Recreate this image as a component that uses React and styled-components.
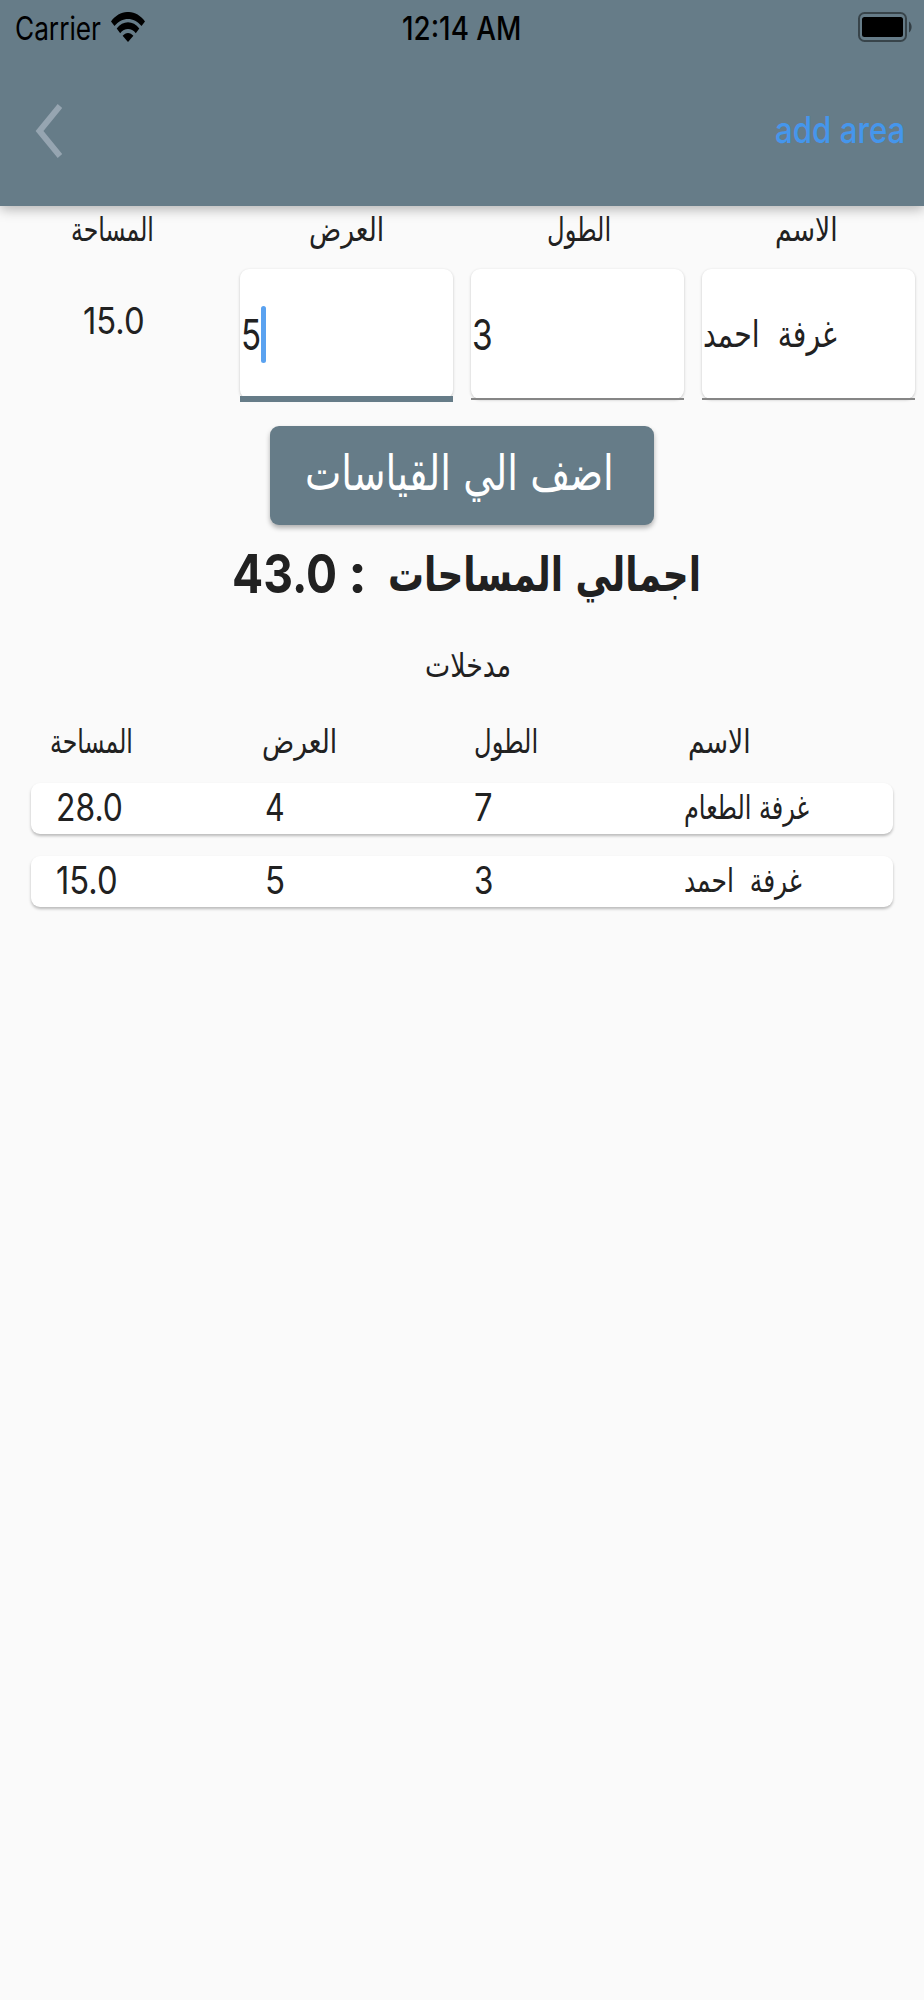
import { useLayoutEffect, useRef, useState } from "react";
import styled, { createGlobalStyle } from "styled-components";

const GlobalStyle = createGlobalStyle`
  * {
    box-sizing: border-box;
  }

  body {
    margin: 0;
    background: #fafafa;
    color: #212121;
    font-family: Inter, "DejaVu Sans", sans-serif;
  }
`;

const Screen = styled.div`
  width: 924px;
  min-height: 2000px;
  background: #fafafa;
`;

const Header = styled.header`
  position: relative;
  height: 206px;
  background: #667c88;
  box-shadow: 0 3px 12px rgba(0, 0, 0, 0.3);
`;

const StatusBar = styled.div`
  display: grid;
  grid-template-columns: 1fr 119px 1fr;
  align-items: center;
  height: 57px;
  padding: 0 12px 0 15px;
  color: #000;
`;

const Carrier = styled.div`
  display: flex;
  align-items: center;
  gap: 10px;
`;

const Time = styled.div`
  margin-left: -2px;
`;

const Battery = styled.svg`
  justify-self: end;
  margin-bottom: 3px;
`;

const Wifi = styled.svg`
  margin-bottom: 3px;
`;

const Toolbar = styled.div`
  display: flex;
  align-items: center;
  justify-content: space-between;
  height: 147px;
  padding: 0 19px 0 35px;
`;

const BackButton = styled.button`
  display: flex;
  padding: 0;
  border: none;
  background: none;
`;

const AddButton = styled.button`
  padding: 0 0 3px;
  border: none;
  background: none;
  color: #4596ec;
`;

const TextBox = styled.span`
  display: block;
  flex: none;
  width: ${({ $width }) => $width}px;
  height: ${({ $height }) => $height}px;
  line-height: ${({ $height }) => $height}px;
  font-size: ${({ $size }) => $size}px;
  font-weight: ${({ $weight }) => $weight};
  font-family: ${({ $arabic }) =>
    $arabic ? '"DejaVu Sans", sans-serif' : "Inter, sans-serif"};
  text-align: left;
  direction: ltr;
`;

const TextInner = styled.span`
  display: inline-block;
  white-space: pre;
  transform-origin: left center;
`;

const FormLabels = styled.div`
  display: grid;
  grid-template-columns: 225px 243px 222px 1fr;
  justify-items: center;
  align-items: center;
  height: 46px;
  padding-right: 2px;
`;

const FormRow = styled.div`
  display: grid;
  grid-template-columns: repeat(4, 1fr);
  height: 174px;
  padding-top: 17px;
`;

const AreaValue = styled.div`
  display: flex;
  align-items: center;
  justify-content: center;
  height: 103px;
  padding-right: 3px;
`;

const Field = styled.div`
  display: flex;
  align-items: center;
  height: 130px;
  margin: 0 9px;
  padding-left: 1px;
  border-radius: 9px;
  background: #fff;
  box-shadow: 0 1px 3px rgba(0, 0, 0, 0.22);
  position: relative;

  &::after {
    content: "";
    position: absolute;
    left: 0;
    right: 0;
    top: ${({ $focused }) => ($focused ? 127 : 129)}px;
    height: ${({ $focused }) => ($focused ? 6 : 2)}px;
    background: ${({ $focused }) => ($focused ? "#667c88" : "#868686")};
  }
`;

const Caret = styled.span`
  width: 5px;
  height: 57px;
  border-radius: 3px;
  background: #5aa2f0;
`;

const SubmitButton = styled.button`
  display: flex;
  align-items: center;
  justify-content: center;
  width: 384px;
  height: 99px;
  margin: 0 auto;
  padding: 0 5px 5px 0;
  border: none;
  border-radius: 9px;
  background: #667c88;
  box-shadow: 0 3px 5px rgba(0, 0, 0, 0.3);
  color: #fff;
`;

const Total = styled.div`
  display: flex;
  align-items: center;
  height: 98px;
  padding-left: 232px;
`;

const Colon = styled.div`
  margin: 0 21px 0 11px;
`;

const SectionTitle = styled.div`
  display: flex;
  justify-content: center;
  height: 81px;
  padding: 21px 0 0 12px;
`;

const EntryGrid = styled.div`
  display: grid;
  grid-template-columns: 212px 212px 214px 1fr;
  align-items: center;
`;

const EntryLabels = styled(EntryGrid)`
  height: 79px;
  padding: 0 0 4px 50px;
`;

const Entries = styled.div`
  display: flex;
  flex-direction: column;
  gap: 22px;
  padding: 0 31px;
`;

const Entry = styled(EntryGrid)`
  grid-template-columns: 209px 209px 210px 1fr;
  height: 51px;
  padding: 0 0 3px 25px;
  border-radius: 9px;
  background: #fff;
  box-shadow: 0 2px 3px rgba(0, 0, 0, 0.26);
`;

// Squeezes a line of text horizontally so that it fills the given width.
const Text = ({ children, width, size, weight = 400, height, arabic }) => {
  const ref = useRef(null);
  const [scale, setScale] = useState(1);

  useLayoutEffect(() => {
    setScale(width / ref.current.offsetWidth);
  }, [width, children]);

  return (
    <TextBox
      $width={width}
      $size={size}
      $weight={weight}
      $height={height || size}
      $arabic={arabic}
    >
      <TextInner
        ref={ref}
        dir={arabic ? "rtl" : "ltr"}
        style={{ transform: `scaleX(${scale})` }}
      >
        {children}
      </TextInner>
    </TextBox>
  );
};

const columns = [
  { label: "المساحة", width: 83 },
  { label: "العرض", width: 75 },
  { label: "الطول", width: 64 },
  { label: "الاسم", width: 63 },
];

const entries = [
  { name: "غرفة الطعام", nameWidth: 125, length: "7", width: "4", area: "28.0", areaWidth: 67 },
  { name: "غرفة  احمد", nameWidth: 118, length: "3", width: "5", area: "15.0", areaWidth: 62 },
];

const App = () => {
  return (
    <Screen>
      <GlobalStyle />
      <Header>
        <StatusBar>
          <Carrier>
            <Text width={86} size={32}>
              Carrier
            </Text>
            <Wifi width="34" height="30" viewBox="0 0 34 30">
              <path d="M0 9.5C9-3.2 25-3.2 34 9.5L30.500 14C23 4.500 11 4.500 3.500 14Z" />
              <path d="M5.700 16.500C12 8.200 22 8.200 28.300 16.500L24.800 21.200C20.500 15.600 13.500 15.600 9.200 21.200Z" />
              <path d="M11.600 23.800C14.600 19.900 19.400 19.900 22.400 23.800L17 30Z" />
            </Wifi>
          </Carrier>
          <Time>
            <Text width={119} size={32} weight={500}>
              12:14 AM
            </Text>
          </Time>
          <Battery width="54" height="30" viewBox="0 0 54 30">
            <rect x="1" y="1" width="47" height="28" rx="5.500" fill="none" stroke="#000" strokeOpacity="0.45" strokeWidth="2" />
            <rect x="4" y="5" width="41" height="20" rx="2.500" />
            <path d="M51 9.500C54.500 12 54.500 18 51 20.500Z" fillOpacity="0.5" />
          </Battery>
        </StatusBar>
        <Toolbar>
          <BackButton aria-label="back">
            <svg width="27" height="54" viewBox="0 0 27 54">
              <path d="M25 2L4.500 27L25 52" fill="none" stroke="#96a5b1" strokeWidth="6" />
            </svg>
          </BackButton>
          <AddButton>
            <Text width={130} size={37} weight={500}>
              add area
            </Text>
          </AddButton>
        </Toolbar>
      </Header>

      <FormLabels>
        {columns.map(({ label, width }) => (
          <Text key={label} width={width} size={33} arabic>
            {label}
          </Text>
        ))}
      </FormLabels>
      <FormRow>
        <AreaValue>
          <Text width={62} size={37}>
            15.0
          </Text>
        </AreaValue>
        <Field $focused>
          <Text width={20} size={43}>
            5
          </Text>
          <Caret />
        </Field>
        <Field>
          <Text width={21} size={43}>
            3
          </Text>
        </Field>
        <Field>
          <Text width={134} size={37} arabic>
            غرفة  احمد
          </Text>
        </Field>
      </FormRow>
      <SubmitButton>
        <Text width={309} size={49} arabic>
          اضف الي القياسات
        </Text>
      </SubmitButton>
      <Total>
        <Text width={105} size={54} weight={700}>
          43.0
        </Text>
        <Colon>
          <Text width={19} size={54} weight={700}>
            :
          </Text>
        </Colon>
        <Text width={313} size={48} weight={700} arabic>
          اجمالي المساحات
        </Text>
      </Total>
      <SectionTitle>
        <Text width={86} size={33} height={44} arabic>
          مدخلات
        </Text>
      </SectionTitle>
      <EntryLabels>
        {columns.map(({ label, width }) => (
          <Text key={label} width={width} size={33} arabic>
            {label}
          </Text>
        ))}
      </EntryLabels>
      <Entries>
        {entries.map((entry) => (
          <Entry key={entry.name}>
            <Text width={entry.areaWidth} size={38}>
              {entry.area}
            </Text>
            <Text width={20} size={38}>
              {entry.width}
            </Text>
            <Text width={19} size={38}>
              {entry.length}
            </Text>
            <Text width={entry.nameWidth} size={33} arabic>
              {entry.name}
            </Text>
          </Entry>
        ))}
      </Entries>
    </Screen>
  );
};

export default App;
